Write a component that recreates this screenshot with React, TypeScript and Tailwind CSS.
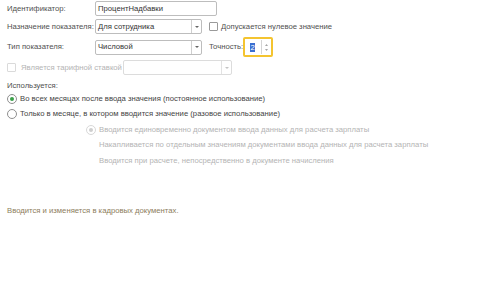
import { ReactNode } from "react";

function Caret({ light }: { light?: boolean }) {
  return (
    <svg width="4" height="2" viewBox="0 0 4 2" className="block">
      <path d="M0 0h4L2 2z" fill={light ? "#c4c4c4" : "#666"} />
    </svg>
  );
}

function SelectBox({ value, width, disabled }: { value: string; width: string; disabled?: boolean }) {
  return (
    <div
      className={`${width} h-[15px] flex items-stretch border rounded-[2px] ${
        disabled ? "border-[#dcdcdc]" : "border-[#bdbdbd]"
      }`}
    >
      <div className="flex-1 flex items-center pl-[2px] text-[#333] whitespace-nowrap">{value}</div>
      <div
        className={`w-[10px] border-l flex items-center justify-center ${
          disabled ? "border-[#e2e2e2]" : "border-[#cfcfcf]"
        }`}
      >
        <Caret light={disabled} />
      </div>
    </div>
  );
}

function Check({ disabled }: { disabled?: boolean }) {
  return (
    <div
      className={`w-[9px] h-[9px] rounded-[1px] border ${
        disabled ? "border-[#dadada]" : "border-[#9a9a9a]"
      } bg-white`}
    />
  );
}

function Radio({ checked, disabled, children }: { checked?: boolean; disabled?: boolean; children: ReactNode }) {
  return (
    <div className="h-[15.5px] flex items-center whitespace-nowrap">
      <div
        className={`w-[10px] h-[10px] rounded-full border flex items-center justify-center ${
          disabled ? "border-[#d8d8d8]" : "border-[#8f8f8f]"
        }`}
      >
        {checked && (
          <div className={`w-[4px] h-[4px] rounded-full ${disabled ? "bg-[#cfcfcf]" : "bg-[#3aa04a]"}`} />
        )}
      </div>
      <span className={`ml-[3px] ${disabled ? "text-[#b4b4b4]" : "text-[#444]"}`}>{children}</span>
    </div>
  );
}

export default function App() {
  return (
    <div className="w-[500px] h-[300px] bg-white overflow-hidden font-['Liberation_Sans',Arial,sans-serif] text-[7.7px] text-[#505050] leading-none">
      <div className="pl-[7px] pt-[1px]">
        {/* Идентификатор */}
        <div className="h-[15px] flex items-center whitespace-nowrap">
          <span className="w-[88px]">Идентификатор:</span>
          <div className="w-[122px] h-[15px] border border-[#bdbdbd] rounded-[2px] flex items-center pl-[2px] text-[#333]">
            ПроцентНадбавки
          </div>
        </div>

        {/* Назначение */}
        <div className="h-[15px] mt-[3px] flex items-center whitespace-nowrap">
          <span className="w-[88px]">Назначение показателя:</span>
          <SelectBox value="Для сотрудника" width="w-[107px]" />
          <div className="ml-[7px]">
            <Check />
          </div>
          <span className="ml-[3px]">Допускается нулевое значение</span>
        </div>

        {/* Тип */}
        <div className="h-[20px] mt-[3px] flex items-center whitespace-nowrap">
          <span className="w-[88px]">Тип показателя:</span>
          <SelectBox value="Числовой" width="w-[107px]" />
          <span className="ml-[7px] w-[34px]">Точность:</span>
          <div className="w-[30px] h-[20px] border-2 border-[#f4c430] rounded-[2px] flex items-stretch">
            <div className="flex-1 flex items-center pl-[5px]">
              <span className="bg-[#3b6fd1] text-white px-[0.5px] leading-[9px]">2</span>
            </div>
            <div className="w-[10px] my-[1px] border-l border-[#d4d4d4] flex flex-col items-center justify-center gap-[3px]">
              <svg width="3" height="2" viewBox="0 0 4 2">
                <path d="M0 2h4L2 0z" fill="#888" />
              </svg>
              <svg width="3" height="2" viewBox="0 0 4 2">
                <path d="M0 0h4L2 2z" fill="#888" />
              </svg>
            </div>
          </div>
        </div>

        {/* Тарифная ставка */}
        <div className="h-[15px] mt-[3px] flex items-center whitespace-nowrap">
          <Check disabled />
          <span className="ml-[5px] w-[102px] text-[#b4b4b4]">Является тарифной ставкой</span>
          <SelectBox value="" width="w-[109px]" disabled />
        </div>

        <div className="h-[10px] mt-[6px] flex items-center">Используется:</div>

        <div>
          <Radio checked>Во всех месяцах после ввода значения (постоянное использование)</Radio>
          <Radio>Только в месяце, в котором вводится значение (разовое использование)</Radio>
          <div className="pl-[79px]">
            <Radio checked disabled>
              Вводится единовременно документом ввода данных для расчета зарплаты
            </Radio>
            <div className="h-[15.5px] flex items-center pl-[13px] text-[#b4b4b4] whitespace-nowrap">
              Накапливается по отдельным значениям документами ввода данных для расчета зарплаты
            </div>
            <div className="h-[15.5px] flex items-center pl-[13px] text-[#b4b4b4] whitespace-nowrap">
              Вводится при расчете, непосредственно в документе начисления
            </div>
          </div>
        </div>

        <div className="mt-[37px] h-[10px] flex items-center text-[#8c7d5c]">
          Вводится и изменяется в кадровых документах.
        </div>
      </div>
    </div>
  );
}
